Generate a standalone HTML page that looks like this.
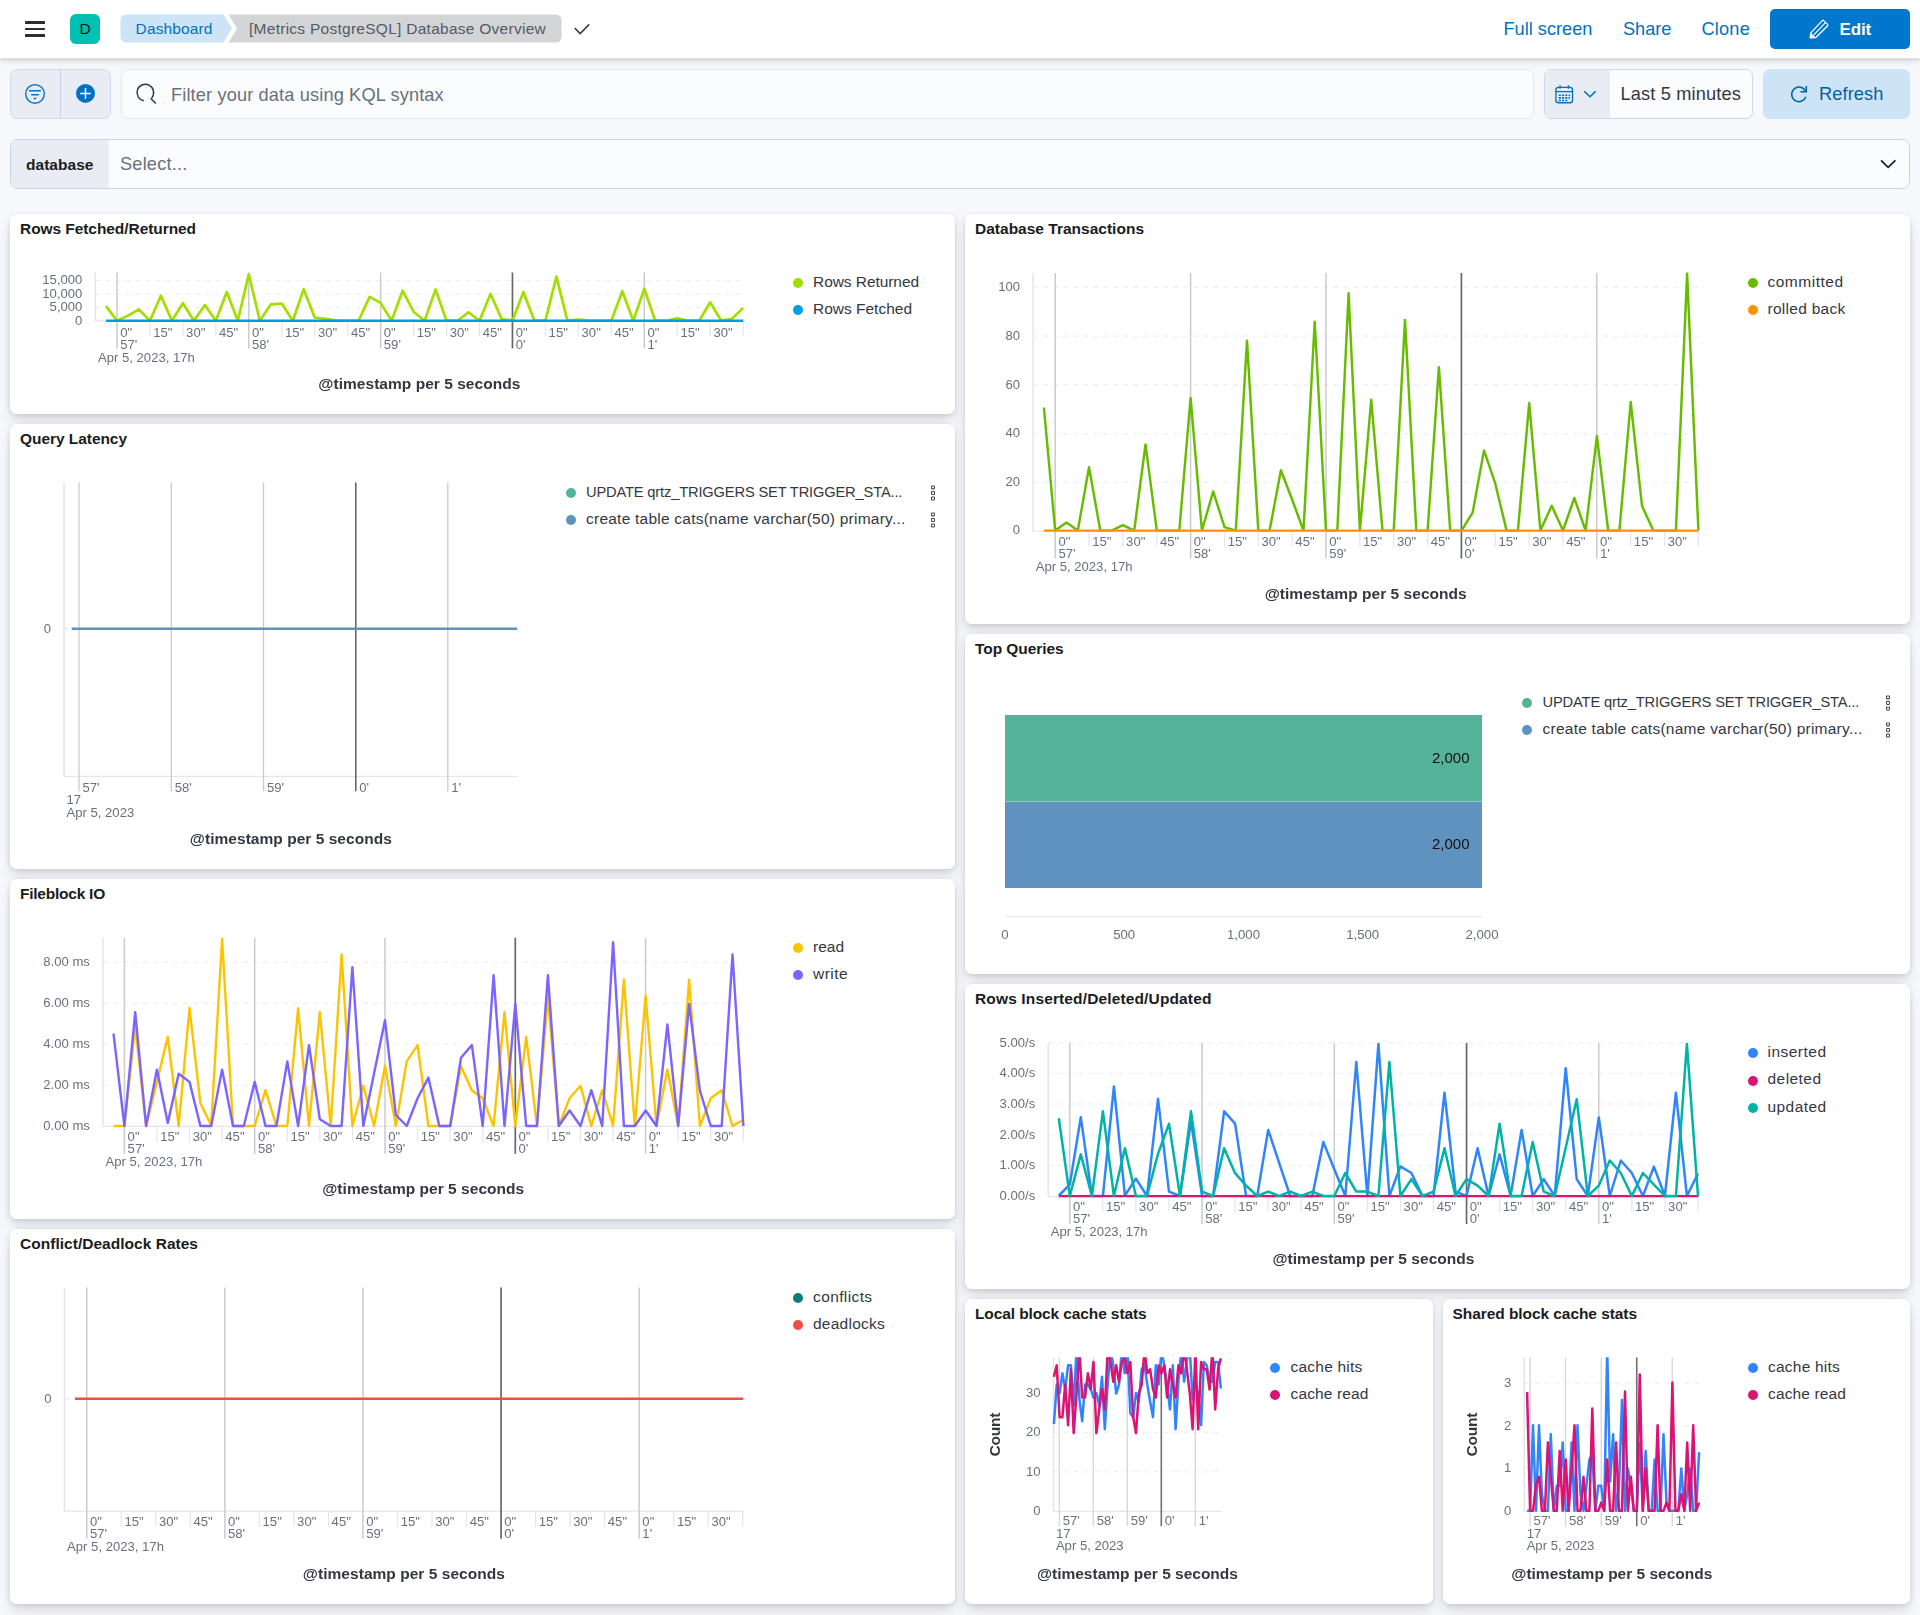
<!DOCTYPE html>
<html lang="en"><head><meta charset="utf-8"><title>[Metrics PostgreSQL] Database Overview</title>
<style>
html,body{margin:0;padding:0}
body{width:1920px;height:1615px;background:#F7F8FC;font-family:"Liberation Sans",sans-serif;position:relative;overflow:hidden;color:#343741}
.abs{position:absolute}
.t{position:absolute;white-space:nowrap;margin:0}
h2.t{font-weight:700}
.panel{position:absolute;background:#fff;border-radius:6.5px;box-shadow:0 1px 4px rgba(0,0,0,.08),0 3px 9px rgba(0,0,0,.065),0 7px 14px rgba(0,0,0,.05),0 14px 18px rgba(0,0,0,.03)}
.dot{position:absolute;width:10px;height:10px;border-radius:50%}
.kebab{position:absolute;width:5px;height:16px}
.kebab i{display:block;box-sizing:border-box;width:4.2px;height:4px;border:1.1px solid #343741;margin-bottom:1.3px;border-radius:.6px}
.bar{position:absolute}
.header{position:absolute;left:0;top:0;width:1920px;height:58px;background:#fff;border-bottom:1px solid rgba(190,198,215,.55);box-shadow:0 1px 3px rgba(0,0,0,.12),0 3px 7px rgba(0,0,0,.07)}
.burger{position:absolute;left:25px;top:21.35px;width:20px}
.burger i{display:block;height:2.6px;background:#2B2D37;margin-bottom:3.7px;border-radius:.5px}
.avatar{position:absolute;left:70px;top:14px;width:30px;height:30px;border-radius:6px;background:#00BFB3;color:#0b0b0d;font-size:15.5px;line-height:29px;text-align:center}
.editbtn{position:absolute;left:1770px;top:8.8px;width:140px;height:40px;border-radius:5px;background:#0077CC}
.fgroup{position:absolute;left:10px;top:69px;width:100.7px;height:49.7px;box-sizing:border-box;border:1px solid #D2D9E8;background:#E9EDF3;border-radius:7px}
.fgroup span{position:absolute;left:49.2px;top:0;bottom:0;width:1px;background:#C9D0E0}
.search{position:absolute;left:121px;top:69px;width:1412.5px;height:49.5px;box-sizing:border-box;border:1px solid #E3E7EF;background:#FBFCFD;border-radius:7px}
.datepick{position:absolute;left:1544px;top:69px;width:208.5px;height:49.5px;box-sizing:border-box;border:1px solid #CED6E6;background:#FBFCFD;border-radius:7px;overflow:hidden}
.datepick span{position:absolute;left:0;top:0;bottom:0;width:65px;background:#E9EDF3}
.refresh{position:absolute;left:1763px;top:69px;width:147px;height:49.5px;border-radius:7px;background:#CCE4F5}
.ctrl{position:absolute;left:10px;top:139px;width:1900px;height:49.6px;box-sizing:border-box;border:1px solid #CDD5E5;background:#FBFCFD;border-radius:7px;overflow:hidden}
.ctrl span{position:absolute;left:0;top:0;bottom:0;width:98px;background:#E9EDF3}
svg text{font-family:"Liberation Sans",sans-serif}
</style></head><body>
<header>
<div class="header"></div>
<div class="burger"><i></i><i></i><i></i></div>
<div class="avatar">D</div>
<svg class="abs" style="left:120px;top:14px" width="450" height="30" viewBox="0 0 450 30"><path d="M6,0.5 H103.5 L112,14.5 L103.5,28.5 H6 A5.5,5.5 0 0 1 0.5,23 V6 A5.5,5.5 0 0 1 6,0.5 Z" fill="#CCE4F5"/><path d="M108.5,0.5 H436 A5.5,5.5 0 0 1 441.5,6 V23 A5.5,5.5 0 0 1 436,28.5 H108.5 L117,14.5 Z" fill="#D3D4D6"/></svg>
<div class="t " style="left:135.60px;top:19.00px;font-size:15.5px;line-height:19px;color:#0071C2;letter-spacing:0.131px;">Dashboard</div>
<div class="t " style="left:249.00px;top:19.00px;font-size:15.5px;line-height:19px;color:#535966;letter-spacing:0.267px;">[Metrics PostgreSQL] Database Overview</div>
<svg class="abs" style="left:572px;top:18px" width="22" height="22" viewBox="0 0 22 22"><path d="M2.8,10.1 L8.2,15.5 L17.2,6.4" fill="none" stroke="#3B3F4A" stroke-width="1.6"/></svg>
<div class="t " style="left:1503.50px;top:18.00px;font-size:18.2px;line-height:22px;color:#0071C2;">Full screen</div>
<div class="t " style="left:1623.00px;top:18.00px;font-size:18.2px;line-height:22px;color:#0071C2;letter-spacing:-0.013px;">Share</div>
<div class="t " style="left:1701.50px;top:18.00px;font-size:18.2px;line-height:22px;color:#0071C2;letter-spacing:0.190px;">Clone</div>
<div class="editbtn"></div>
<svg class="abs" style="left:1808px;top:18px" width="22" height="22" viewBox="0 0 22 22"><path d="M2.8,14.9 L14.3,2.6 Q14.9,2 15.6,2.6 L19.6,6.4 Q20.2,7 19.6,7.7 L7.8,19.5 L2.2,19.9 Z" fill="none" stroke="#fff" stroke-width="1.3" stroke-linejoin="round"/><path d="M2.8,14.9 L7.8,19.5 L2.2,19.9 Z" fill="#fff"/><path d="M5.6,17.1 L17.4,4.7" stroke="#fff" stroke-width="1.2" fill="none"/></svg>
<div class="t " style="left:1839.60px;top:20.00px;font-size:17px;line-height:20px;color:#fff;font-weight:700;letter-spacing:-0.177px;">Edit</div>
<div class="fgroup"><span></span></div>
<svg class="abs" style="left:23px;top:82px" width="24" height="24" viewBox="0 0 24 24"><circle cx="12" cy="11.9" r="9.3" fill="none" stroke="#0071C2" stroke-width="1.35"/><path d="M6,8.8 H17.9 M8.2,12.7 H15.8 M10.7,16.5 H13.3" stroke="#0071C2" stroke-width="1.5" fill="none"/></svg>
<svg class="abs" style="left:73px;top:81px" width="24" height="24" viewBox="0 0 24 24"><circle cx="12.5" cy="12.4" r="9.5" fill="#0071C2"/><path d="M12.5,7.1 V17.7 M7.2,12.4 H17.8" stroke="#fff" stroke-width="1.5" fill="none"/></svg>
<div class="search"></div>
<svg class="abs" style="left:133px;top:81px" width="26" height="26" viewBox="0 0 26 26"><path d="M10.86,19.77 A8.3,8.3 0 1 1 18.66,16.93" fill="none" stroke="#343741" stroke-width="1.45"/><path d="M17.5,17.2 L22.9,22.6" stroke="#343741" stroke-width="1.45" fill="none"/></svg>
<div class="t " style="left:171.00px;top:84.00px;font-size:18.2px;line-height:22px;color:#69707D;letter-spacing:0.140px;">Filter your data using KQL syntax</div>
<div class="datepick"><span></span></div>
<svg class="abs" style="left:1554.4px;top:83.8px" width="21" height="21" viewBox="0 0 22 22"><rect x="2" y="3.6" width="17.4" height="16" rx="2.6" fill="none" stroke="#0071C2" stroke-width="1.4"/><path d="M2,8 H19.4 M6.3,1.4 V5 M15.1,1.4 V5" stroke="#0071C2" stroke-width="1.4" fill="none"/><path d="M5,10.9h2.2v1.7h-2.2z M8.4,10.9h2.2v1.7h-2.2z M11.8,10.9h2.2v1.7h-2.2z M15.2,10.9h1.6v1.7h-1.6z M5,13.7h2.2v1.7h-2.2z M8.4,13.7h2.2v1.7h-2.2z M11.8,13.7h2.2v1.7h-2.2z M15.2,13.7h1.6v1.7h-1.6z M5,16.4h2.2v1.6h-2.2z M8.4,16.4h2.2v1.6h-2.2z M11.8,16.4h2.2v1.6h-2.2z" fill="#0071C2"/></svg>
<svg class="abs" style="left:1582px;top:87px" width="16" height="14" viewBox="0 0 16 14"><path d="M2.4,4.4 L8,9.8 L13.6,4.4" fill="none" stroke="#0071C2" stroke-width="1.5"/></svg>
<div class="t " style="left:1620.50px;top:83.00px;font-size:18.2px;line-height:22px;color:#343741;letter-spacing:0.153px;">Last 5 minutes</div>
<div class="refresh"></div>
<svg class="abs" style="left:1787px;top:82px" width="24" height="24" viewBox="0 0 24 24"><path d="M18.6,9.2 A7.3,7.3 0 1 0 18.9,14.8" fill="none" stroke="#0061A6" stroke-width="1.5"/><path d="M19.3,3.9 V9.7 H13.5" fill="none" stroke="#0061A6" stroke-width="1.5"/></svg>
<div class="t " style="left:1819.00px;top:83.00px;font-size:18.2px;line-height:22px;color:#0061A6;letter-spacing:0.111px;">Refresh</div>
<div class="ctrl"><span></span></div>
<div class="t " style="left:26.00px;top:155.00px;font-size:15.5px;line-height:19px;color:#1A1C21;font-weight:700;letter-spacing:0.038px;">database</div>
<div class="t " style="left:120.00px;top:153.00px;font-size:18.2px;line-height:22px;color:#69707D;letter-spacing:0.194px;">Select...</div>
<svg class="abs" style="left:1878px;top:155px" width="20" height="18" viewBox="0 0 20 18"><path d="M3,5.4 L10.2,12.4 L17.4,5.4" fill="none" stroke="#1A1C21" stroke-width="1.7"/></svg>
</header>
<main>
<section>
<div class="panel" style="left:10px;top:214px;width:945px;height:200px"></div>
<h2 class="t ptitle" style="left:20.00px;top:219.00px;font-size:15.5px;line-height:19px;color:#1A1C21;font-weight:700;letter-spacing:-0.067px;">Rows Fetched/Returned</h2>
<div class="dot" style="left:792.9px;top:277.9px;background:#A4DD00"></div>
<div class="t leg" style="left:813.00px;top:272.00px;font-size:15.5px;line-height:19px;color:#343741;letter-spacing:-0.063px;">Rows Returned</div>
<div class="dot" style="left:792.9px;top:305.0px;background:#009CE0"></div>
<div class="t leg" style="left:813.00px;top:299.00px;font-size:15.5px;line-height:19px;color:#343741;letter-spacing:-0.005px;">Rows Fetched</div>
</section>
<section>
<div class="panel" style="left:10px;top:424px;width:945px;height:445px"></div>
<h2 class="t ptitle" style="left:20.00px;top:429.00px;font-size:15.5px;line-height:19px;color:#1A1C21;font-weight:700;letter-spacing:-0.052px;">Query Latency</h2>
<div class="dot" style="left:565.8px;top:487.9px;background:#54B399"></div>
<div class="t leg" style="left:586.00px;top:483.00px;font-size:14.7px;line-height:18px;color:#343741;letter-spacing:-0.171px;">UPDATE qrtz_TRIGGERS SET TRIGGER_STA...</div>
<svg class="abs" style="left:930.0px;top:484.5px" width="6" height="17" viewBox="0 0 6 17"><g fill="none" stroke="#454956" stroke-width="1.05"><rect x="1.55" y="0.95" width="2.9" height="2.9" rx=".5"/><rect x="1.55" y="6.5" width="2.9" height="2.9" rx=".5"/><rect x="1.55" y="12.05" width="2.9" height="2.9" rx=".5"/></g></svg>
<div class="dot" style="left:565.8px;top:515.0px;background:#6092C0"></div>
<div class="t leg" style="left:586.00px;top:509.00px;font-size:15.5px;line-height:19px;color:#343741;letter-spacing:0.235px;">create table cats(name varchar(50) primary...</div>
<svg class="abs" style="left:930.0px;top:512.4px" width="6" height="17" viewBox="0 0 6 17"><g fill="none" stroke="#454956" stroke-width="1.05"><rect x="1.55" y="0.95" width="2.9" height="2.9" rx=".5"/><rect x="1.55" y="6.5" width="2.9" height="2.9" rx=".5"/><rect x="1.55" y="12.05" width="2.9" height="2.9" rx=".5"/></g></svg>
</section>
<section>
<div class="panel" style="left:10px;top:879px;width:945px;height:340px"></div>
<h2 class="t ptitle" style="left:20.00px;top:884.00px;font-size:15.5px;line-height:19px;color:#1A1C21;font-weight:700;letter-spacing:-0.237px;">Fileblock IO</h2>
<div class="dot" style="left:792.9px;top:942.9px;background:#FCC400"></div>
<div class="t leg" style="left:813.00px;top:937.00px;font-size:15.5px;line-height:19px;color:#343741;">read</div>
<div class="dot" style="left:792.9px;top:970.0px;background:#7B64FF"></div>
<div class="t leg" style="left:813.00px;top:964.00px;font-size:15.5px;line-height:19px;color:#343741;letter-spacing:0.455px;">write</div>
</section>
<section>
<div class="panel" style="left:10px;top:1229px;width:945px;height:375px"></div>
<h2 class="t ptitle" style="left:20.00px;top:1234.00px;font-size:15.5px;line-height:19px;color:#1A1C21;font-weight:700;letter-spacing:0.025px;">Conflict/Deadlock Rates</h2>
<div class="dot" style="left:792.9px;top:1292.9px;background:#0E7D7D"></div>
<div class="t leg" style="left:813.00px;top:1287.00px;font-size:15.5px;line-height:19px;color:#343741;letter-spacing:0.390px;">conflicts</div>
<div class="dot" style="left:792.9px;top:1320.0px;background:#F04E3E"></div>
<div class="t leg" style="left:813.00px;top:1314.00px;font-size:15.5px;line-height:19px;color:#343741;letter-spacing:0.245px;">deadlocks</div>
</section>
<section>
<div class="panel" style="left:965px;top:214px;width:945px;height:410px"></div>
<h2 class="t ptitle" style="left:975.00px;top:219.00px;font-size:15.5px;line-height:19px;color:#1A1C21;font-weight:700;letter-spacing:0.008px;">Database Transactions</h2>
<div class="dot" style="left:1747.6px;top:277.9px;background:#68BC00"></div>
<div class="t leg" style="left:1767.50px;top:272.00px;font-size:15.5px;line-height:19px;color:#343741;letter-spacing:0.502px;">committed</div>
<div class="dot" style="left:1747.6px;top:305.0px;background:#FE9200"></div>
<div class="t leg" style="left:1767.50px;top:299.00px;font-size:15.5px;line-height:19px;color:#343741;letter-spacing:0.277px;">rolled back</div>
</section>
<section>
<div class="panel" style="left:965px;top:634px;width:945px;height:340px"></div>
<h2 class="t ptitle" style="left:975.00px;top:639.00px;font-size:15.5px;line-height:19px;color:#1A1C21;font-weight:700;letter-spacing:-0.071px;">Top Queries</h2>
<div class="bar" style="left:1005px;top:715px;width:477px;height:86.5px;background:#54B399"></div>
<div class="bar" style="left:1005px;top:801.5px;width:477px;height:86.5px;background:#6092C0"></div>
<div class="dot" style="left:1521.6px;top:697.9px;background:#54B399"></div>
<div class="t leg" style="left:1542.50px;top:693.00px;font-size:14.7px;line-height:18px;color:#343741;letter-spacing:-0.159px;">UPDATE qrtz_TRIGGERS SET TRIGGER_STA...</div>
<svg class="abs" style="left:1884.9px;top:694.5px" width="6" height="17" viewBox="0 0 6 17"><g fill="none" stroke="#454956" stroke-width="1.05"><rect x="1.55" y="0.95" width="2.9" height="2.9" rx=".5"/><rect x="1.55" y="6.5" width="2.9" height="2.9" rx=".5"/><rect x="1.55" y="12.05" width="2.9" height="2.9" rx=".5"/></g></svg>
<div class="dot" style="left:1521.6px;top:725.0px;background:#6092C0"></div>
<div class="t leg" style="left:1542.50px;top:719.00px;font-size:15.5px;line-height:19px;color:#343741;letter-spacing:0.246px;">create table cats(name varchar(50) primary...</div>
<svg class="abs" style="left:1884.9px;top:722.4px" width="6" height="17" viewBox="0 0 6 17"><g fill="none" stroke="#454956" stroke-width="1.05"><rect x="1.55" y="0.95" width="2.9" height="2.9" rx=".5"/><rect x="1.55" y="6.5" width="2.9" height="2.9" rx=".5"/><rect x="1.55" y="12.05" width="2.9" height="2.9" rx=".5"/></g></svg>
</section>
<section>
<div class="panel" style="left:965px;top:984px;width:945px;height:305px"></div>
<h2 class="t ptitle" style="left:975.00px;top:989.00px;font-size:15.5px;line-height:19px;color:#1A1C21;font-weight:700;letter-spacing:0.137px;">Rows Inserted/Deleted/Updated</h2>
<div class="dot" style="left:1747.6px;top:1048.0px;background:#3185FC"></div>
<div class="t leg" style="left:1767.50px;top:1042.00px;font-size:15.5px;line-height:19px;color:#343741;letter-spacing:0.483px;">inserted</div>
<div class="dot" style="left:1747.6px;top:1075.5px;background:#DB1374"></div>
<div class="t leg" style="left:1767.50px;top:1069.00px;font-size:15.5px;line-height:19px;color:#343741;letter-spacing:0.450px;">deleted</div>
<div class="dot" style="left:1747.6px;top:1102.9px;background:#00B3A4"></div>
<div class="t leg" style="left:1767.50px;top:1097.00px;font-size:15.5px;line-height:19px;color:#343741;letter-spacing:0.425px;">updated</div>
</section>
<section>
<div class="panel" style="left:965px;top:1299px;width:467.5px;height:305px"></div>
<h2 class="t ptitle" style="left:975.00px;top:1304.00px;font-size:15.5px;line-height:19px;color:#1A1C21;font-weight:700;letter-spacing:-0.109px;">Local block cache stats</h2>
<div class="dot" style="left:1270.0px;top:1362.9px;background:#3185FC"></div>
<div class="t leg" style="left:1290.50px;top:1357.00px;font-size:15.5px;line-height:19px;color:#343741;letter-spacing:0.222px;">cache hits</div>
<div class="dot" style="left:1270.0px;top:1390.0px;background:#DB1374"></div>
<div class="t leg" style="left:1290.50px;top:1384.00px;font-size:15.5px;line-height:19px;color:#343741;letter-spacing:0.132px;">cache read</div>
</section>
<section>
<div class="panel" style="left:1442.5px;top:1299px;width:467.5px;height:305px"></div>
<h2 class="t ptitle" style="left:1452.50px;top:1304.00px;font-size:15.5px;line-height:19px;color:#1A1C21;font-weight:700;letter-spacing:-0.065px;">Shared block cache stats</h2>
<div class="dot" style="left:1748.0px;top:1362.9px;background:#3185FC"></div>
<div class="t leg" style="left:1768.00px;top:1357.00px;font-size:15.5px;line-height:19px;color:#343741;letter-spacing:0.222px;">cache hits</div>
<div class="dot" style="left:1748.0px;top:1390.0px;background:#DB1374"></div>
<div class="t leg" style="left:1768.00px;top:1384.00px;font-size:15.5px;line-height:19px;color:#343741;letter-spacing:0.132px;">cache read</div>
</section>
</main>
<svg class="abs" style="left:0;top:0;pointer-events:none;will-change:transform" width="1920" height="1615" viewBox="0 0 1920 1615">
<line x1="95.40" y1="280.40" x2="743.00" y2="280.40" stroke="#E9ECF3" stroke-width="1" stroke-dasharray="5 5"/>
<line x1="95.40" y1="294.00" x2="743.00" y2="294.00" stroke="#E9ECF3" stroke-width="1" stroke-dasharray="5 5"/>
<line x1="95.40" y1="307.60" x2="743.00" y2="307.60" stroke="#E9ECF3" stroke-width="1" stroke-dasharray="5 5"/>
<line x1="95.40" y1="272.50" x2="95.40" y2="321.40" stroke="#E1E4EC" stroke-width="1.5" />
<line x1="95.40" y1="320.90" x2="743.20" y2="320.90" stroke="#E3E6EE" stroke-width="1.25" />
<line x1="117.00" y1="272.50" x2="117.00" y2="348.40" stroke="#CBCBCB" stroke-width="1.5" />
<text x="120.20" y="348.90" font-size="13.1" fill="#69707D" >57'</text>
<text x="120.20" y="336.90" font-size="13.1" fill="#69707D" >0&quot;</text>
<line x1="149.95" y1="320.90" x2="149.95" y2="336.40" stroke="#E3E6EE" stroke-width="1.25" />
<text x="153.15" y="336.90" font-size="13.1" fill="#69707D" >15&quot;</text>
<line x1="182.91" y1="320.90" x2="182.91" y2="336.40" stroke="#E3E6EE" stroke-width="1.25" />
<text x="186.11" y="336.90" font-size="13.1" fill="#69707D" >30&quot;</text>
<line x1="215.87" y1="320.90" x2="215.87" y2="336.40" stroke="#E3E6EE" stroke-width="1.25" />
<text x="219.06" y="336.90" font-size="13.1" fill="#69707D" >45&quot;</text>
<line x1="248.82" y1="272.50" x2="248.82" y2="348.40" stroke="#CBCBCB" stroke-width="1.5" />
<text x="252.02" y="348.90" font-size="13.1" fill="#69707D" >58'</text>
<text x="252.02" y="336.90" font-size="13.1" fill="#69707D" >0&quot;</text>
<line x1="281.77" y1="320.90" x2="281.77" y2="336.40" stroke="#E3E6EE" stroke-width="1.25" />
<text x="284.97" y="336.90" font-size="13.1" fill="#69707D" >15&quot;</text>
<line x1="314.73" y1="320.90" x2="314.73" y2="336.40" stroke="#E3E6EE" stroke-width="1.25" />
<text x="317.93" y="336.90" font-size="13.1" fill="#69707D" >30&quot;</text>
<line x1="347.69" y1="320.90" x2="347.69" y2="336.40" stroke="#E3E6EE" stroke-width="1.25" />
<text x="350.88" y="336.90" font-size="13.1" fill="#69707D" >45&quot;</text>
<line x1="380.64" y1="272.50" x2="380.64" y2="348.40" stroke="#CBCBCB" stroke-width="1.5" />
<text x="383.84" y="348.90" font-size="13.1" fill="#69707D" >59'</text>
<text x="383.84" y="336.90" font-size="13.1" fill="#69707D" >0&quot;</text>
<line x1="413.59" y1="320.90" x2="413.59" y2="336.40" stroke="#E3E6EE" stroke-width="1.25" />
<text x="416.79" y="336.90" font-size="13.1" fill="#69707D" >15&quot;</text>
<line x1="446.55" y1="320.90" x2="446.55" y2="336.40" stroke="#E3E6EE" stroke-width="1.25" />
<text x="449.75" y="336.90" font-size="13.1" fill="#69707D" >30&quot;</text>
<line x1="479.50" y1="320.90" x2="479.50" y2="336.40" stroke="#E3E6EE" stroke-width="1.25" />
<text x="482.70" y="336.90" font-size="13.1" fill="#69707D" >45&quot;</text>
<line x1="512.46" y1="272.50" x2="512.46" y2="348.40" stroke="#676767" stroke-width="1.7" />
<text x="515.66" y="348.90" font-size="13.1" fill="#69707D" >0'</text>
<text x="515.66" y="336.90" font-size="13.1" fill="#69707D" >0&quot;</text>
<line x1="545.41" y1="320.90" x2="545.41" y2="336.40" stroke="#E3E6EE" stroke-width="1.25" />
<text x="548.62" y="336.90" font-size="13.1" fill="#69707D" >15&quot;</text>
<line x1="578.37" y1="320.90" x2="578.37" y2="336.40" stroke="#E3E6EE" stroke-width="1.25" />
<text x="581.57" y="336.90" font-size="13.1" fill="#69707D" >30&quot;</text>
<line x1="611.33" y1="320.90" x2="611.33" y2="336.40" stroke="#E3E6EE" stroke-width="1.25" />
<text x="614.53" y="336.90" font-size="13.1" fill="#69707D" >45&quot;</text>
<line x1="644.28" y1="272.50" x2="644.28" y2="348.40" stroke="#CBCBCB" stroke-width="1.5" />
<text x="647.48" y="348.90" font-size="13.1" fill="#69707D" >1'</text>
<text x="647.48" y="336.90" font-size="13.1" fill="#69707D" >0&quot;</text>
<line x1="677.24" y1="320.90" x2="677.24" y2="336.40" stroke="#E3E6EE" stroke-width="1.25" />
<text x="680.44" y="336.90" font-size="13.1" fill="#69707D" >15&quot;</text>
<line x1="710.19" y1="320.90" x2="710.19" y2="336.40" stroke="#E3E6EE" stroke-width="1.25" />
<text x="713.39" y="336.90" font-size="13.1" fill="#69707D" >30&quot;</text>
<line x1="743.14" y1="320.90" x2="743.14" y2="336.40" stroke="#E3E6EE" stroke-width="1.25" />
<text x="98.00" y="361.90" font-size="13.1" fill="#69707D" >Apr 5, 2023, 17h</text>
<text x="419.30" y="388.80" font-size="15.5" fill="#343741" text-anchor="middle" font-weight="700" textLength="202.0" lengthAdjust="spacing" >@timestamp per 5 seconds</text>
<text x="82.40" y="283.95" font-size="13.1" fill="#69707D" text-anchor="end" >15,000</text>
<text x="82.40" y="297.75" font-size="13.1" fill="#69707D" text-anchor="end" >10,000</text>
<text x="82.40" y="311.35" font-size="13.1" fill="#69707D" text-anchor="end" >5,000</text>
<text x="82.40" y="324.55" font-size="13.1" fill="#69707D" text-anchor="end" >0</text>
<polyline points="106.0,306.1 117.0,320.7 128.0,315.6 138.9,309.4 149.9,320.7 160.9,295.7 171.9,320.7 182.9,303.2 193.9,320.7 204.9,305.1 215.8,320.7 226.8,292.0 237.8,320.7 248.8,274.2 259.8,320.7 270.8,304.4 281.8,303.6 292.8,320.7 303.7,289.2 314.7,317.5 325.7,318.8 336.7,320.7 347.7,320.7 358.6,320.7 369.6,296.9 380.6,302.9 391.6,320.7 402.6,290.7 413.6,311.7 424.6,320.7 435.6,289.4 446.5,320.7 457.5,320.7 468.5,312.2 479.5,320.7 490.5,293.9 501.5,318.8 512.4,320.7 523.4,292.0 534.4,320.7 545.4,320.7 556.4,276.6 567.4,320.7 578.4,319.7 589.3,320.7 600.3,320.7 611.3,320.7 622.3,291.2 633.3,320.7 644.3,288.8 655.2,320.7 666.2,320.7 677.2,318.2 688.2,320.7 699.2,320.7 710.2,302.3 721.2,320.7 732.1,318.8 743.1,307.9" fill="none" stroke="#A4DD00" stroke-width="2.7" stroke-linejoin="round" />
<line x1="106.00" y1="320.70" x2="743.20" y2="320.70" stroke="#009CE0" stroke-width="2.6" />
<line x1="64.10" y1="482.40" x2="64.10" y2="776.80" stroke="#E1E4EC" stroke-width="1.5" />
<line x1="64.10" y1="776.30" x2="517.50" y2="776.30" stroke="#E3E6EE" stroke-width="1.25" />
<line x1="79.00" y1="482.40" x2="79.00" y2="791.30" stroke="#CBCBCB" stroke-width="1.3" />
<text x="82.40" y="791.80" font-size="13.1" fill="#69707D" >57'</text>
<line x1="171.30" y1="482.40" x2="171.30" y2="791.30" stroke="#CBCBCB" stroke-width="1.3" />
<text x="174.70" y="791.80" font-size="13.1" fill="#69707D" >58'</text>
<line x1="263.50" y1="482.40" x2="263.50" y2="791.30" stroke="#CBCBCB" stroke-width="1.3" />
<text x="266.90" y="791.80" font-size="13.1" fill="#69707D" >59'</text>
<line x1="355.80" y1="482.40" x2="355.80" y2="791.30" stroke="#676767" stroke-width="1.6" />
<text x="359.20" y="791.80" font-size="13.1" fill="#69707D" >0'</text>
<line x1="447.80" y1="482.40" x2="447.80" y2="791.30" stroke="#CBCBCB" stroke-width="1.3" />
<text x="451.20" y="791.80" font-size="13.1" fill="#69707D" >1'</text>
<text x="66.50" y="803.90" font-size="13.1" fill="#69707D" >17</text>
<text x="66.50" y="816.90" font-size="13.1" fill="#69707D" >Apr 5, 2023</text>
<text x="290.80" y="844.30" font-size="15.5" fill="#343741" text-anchor="middle" font-weight="700" textLength="202.0" lengthAdjust="spacing" >@timestamp per 5 seconds</text>
<text x="51.10" y="633.15" font-size="13.1" fill="#69707D" text-anchor="end" >0</text>
<line x1="64.10" y1="628.70" x2="69.00" y2="628.70" stroke="#E3E6EE" stroke-width="1" />
<line x1="71.70" y1="628.70" x2="517.20" y2="628.70" stroke="#6092C0" stroke-width="2.4" />
<line x1="102.90" y1="962.30" x2="743.00" y2="962.30" stroke="#E9ECF3" stroke-width="1" stroke-dasharray="5 5"/>
<line x1="102.90" y1="1003.30" x2="743.00" y2="1003.30" stroke="#E9ECF3" stroke-width="1" stroke-dasharray="5 5"/>
<line x1="102.90" y1="1044.20" x2="743.00" y2="1044.20" stroke="#E9ECF3" stroke-width="1" stroke-dasharray="5 5"/>
<line x1="102.90" y1="1085.20" x2="743.00" y2="1085.20" stroke="#E9ECF3" stroke-width="1" stroke-dasharray="5 5"/>
<line x1="102.90" y1="937.80" x2="102.90" y2="1126.80" stroke="#E1E4EC" stroke-width="1.5" />
<line x1="102.90" y1="1126.30" x2="743.50" y2="1126.30" stroke="#E3E6EE" stroke-width="1.25" />
<line x1="124.40" y1="937.80" x2="124.40" y2="1153.80" stroke="#CBCBCB" stroke-width="1.5" />
<text x="127.60" y="1152.80" font-size="13.1" fill="#69707D" >57'</text>
<text x="127.60" y="1140.80" font-size="13.1" fill="#69707D" >0&quot;</text>
<line x1="156.98" y1="1126.30" x2="156.98" y2="1141.80" stroke="#E3E6EE" stroke-width="1.25" />
<text x="160.18" y="1140.80" font-size="13.1" fill="#69707D" >15&quot;</text>
<line x1="189.55" y1="1126.30" x2="189.55" y2="1141.80" stroke="#E3E6EE" stroke-width="1.25" />
<text x="192.75" y="1140.80" font-size="13.1" fill="#69707D" >30&quot;</text>
<line x1="222.12" y1="1126.30" x2="222.12" y2="1141.80" stroke="#E3E6EE" stroke-width="1.25" />
<text x="225.32" y="1140.80" font-size="13.1" fill="#69707D" >45&quot;</text>
<line x1="254.70" y1="937.80" x2="254.70" y2="1153.80" stroke="#CBCBCB" stroke-width="1.5" />
<text x="257.90" y="1152.80" font-size="13.1" fill="#69707D" >58'</text>
<text x="257.90" y="1140.80" font-size="13.1" fill="#69707D" >0&quot;</text>
<line x1="287.27" y1="1126.30" x2="287.27" y2="1141.80" stroke="#E3E6EE" stroke-width="1.25" />
<text x="290.47" y="1140.80" font-size="13.1" fill="#69707D" >15&quot;</text>
<line x1="319.85" y1="1126.30" x2="319.85" y2="1141.80" stroke="#E3E6EE" stroke-width="1.25" />
<text x="323.05" y="1140.80" font-size="13.1" fill="#69707D" >30&quot;</text>
<line x1="352.43" y1="1126.30" x2="352.43" y2="1141.80" stroke="#E3E6EE" stroke-width="1.25" />
<text x="355.63" y="1140.80" font-size="13.1" fill="#69707D" >45&quot;</text>
<line x1="385.00" y1="937.80" x2="385.00" y2="1153.80" stroke="#CBCBCB" stroke-width="1.5" />
<text x="388.20" y="1152.80" font-size="13.1" fill="#69707D" >59'</text>
<text x="388.20" y="1140.80" font-size="13.1" fill="#69707D" >0&quot;</text>
<line x1="417.58" y1="1126.30" x2="417.58" y2="1141.80" stroke="#E3E6EE" stroke-width="1.25" />
<text x="420.78" y="1140.80" font-size="13.1" fill="#69707D" >15&quot;</text>
<line x1="450.15" y1="1126.30" x2="450.15" y2="1141.80" stroke="#E3E6EE" stroke-width="1.25" />
<text x="453.35" y="1140.80" font-size="13.1" fill="#69707D" >30&quot;</text>
<line x1="482.73" y1="1126.30" x2="482.73" y2="1141.80" stroke="#E3E6EE" stroke-width="1.25" />
<text x="485.93" y="1140.80" font-size="13.1" fill="#69707D" >45&quot;</text>
<line x1="515.30" y1="937.80" x2="515.30" y2="1153.80" stroke="#676767" stroke-width="1.7" />
<text x="518.50" y="1152.80" font-size="13.1" fill="#69707D" >0'</text>
<text x="518.50" y="1140.80" font-size="13.1" fill="#69707D" >0&quot;</text>
<line x1="547.88" y1="1126.30" x2="547.88" y2="1141.80" stroke="#E3E6EE" stroke-width="1.25" />
<text x="551.08" y="1140.80" font-size="13.1" fill="#69707D" >15&quot;</text>
<line x1="580.45" y1="1126.30" x2="580.45" y2="1141.80" stroke="#E3E6EE" stroke-width="1.25" />
<text x="583.65" y="1140.80" font-size="13.1" fill="#69707D" >30&quot;</text>
<line x1="613.03" y1="1126.30" x2="613.03" y2="1141.80" stroke="#E3E6EE" stroke-width="1.25" />
<text x="616.23" y="1140.80" font-size="13.1" fill="#69707D" >45&quot;</text>
<line x1="645.60" y1="937.80" x2="645.60" y2="1153.80" stroke="#CBCBCB" stroke-width="1.5" />
<text x="648.80" y="1152.80" font-size="13.1" fill="#69707D" >1'</text>
<text x="648.80" y="1140.80" font-size="13.1" fill="#69707D" >0&quot;</text>
<line x1="678.18" y1="1126.30" x2="678.18" y2="1141.80" stroke="#E3E6EE" stroke-width="1.25" />
<text x="681.38" y="1140.80" font-size="13.1" fill="#69707D" >15&quot;</text>
<line x1="710.75" y1="1126.30" x2="710.75" y2="1141.80" stroke="#E3E6EE" stroke-width="1.25" />
<text x="713.95" y="1140.80" font-size="13.1" fill="#69707D" >30&quot;</text>
<line x1="743.33" y1="1126.30" x2="743.33" y2="1141.80" stroke="#E3E6EE" stroke-width="1.25" />
<text x="105.50" y="1165.80" font-size="13.1" fill="#69707D" >Apr 5, 2023, 17h</text>
<text x="423.20" y="1193.80" font-size="15.5" fill="#343741" text-anchor="middle" font-weight="700" textLength="202.0" lengthAdjust="spacing" >@timestamp per 5 seconds</text>
<text x="89.90" y="965.95" font-size="13.1" fill="#69707D" text-anchor="end" >8.00 ms</text>
<text x="89.90" y="1006.95" font-size="13.1" fill="#69707D" text-anchor="end" >6.00 ms</text>
<text x="89.90" y="1047.95" font-size="13.1" fill="#69707D" text-anchor="end" >4.00 ms</text>
<text x="89.90" y="1088.95" font-size="13.1" fill="#69707D" text-anchor="end" >2.00 ms</text>
<text x="89.90" y="1129.65" font-size="13.1" fill="#69707D" text-anchor="end" >0.00 ms</text>
<polyline points="113.5,1126.0 124.4,1126.0 135.2,1025.6 146.1,1126.0 156.9,1081.9 167.8,1036.9 178.7,1126.0 189.5,1007.8 200.4,1103.2 211.2,1125.3 222.1,938.9 233.0,1126.0 243.8,1126.0 254.7,1126.0 265.5,1090.2 276.4,1126.0 287.3,1126.0 298.1,1008.3 309.0,1126.0 319.8,1012.2 330.7,1126.0 341.6,954.5 352.4,1126.0 363.3,1085.8 374.1,1126.0 385.0,1065.7 395.9,1126.0 406.7,1061.4 417.6,1045.1 428.4,1126.0 439.3,1126.0 450.2,1126.0 461.0,1066.3 471.9,1090.6 482.7,1098.2 493.6,1126.0 504.5,1012.2 515.3,1126.0 526.2,1036.9 537.0,1126.0 547.9,996.4 558.8,1126.0 569.6,1098.2 580.5,1085.8 591.3,1126.0 602.2,1090.2 613.1,1126.0 623.9,979.7 634.8,1126.0 645.6,995.9 656.5,1126.0 667.4,1069.6 678.2,1126.0 689.1,979.7 699.9,1126.0 710.8,1098.2 721.7,1090.2 732.5,1126.0 743.4,1119.9" fill="none" stroke="#FCC400" stroke-width="2.4" stroke-linejoin="round" />
<polyline points="113.5,1033.6 124.4,1126.0 135.2,1012.2 146.1,1126.0 156.9,1069.6 167.8,1123.1 178.7,1073.7 189.5,1081.9 200.4,1126.0 211.2,1126.0 222.1,1069.6 233.0,1126.0 243.8,1126.0 254.7,1081.9 265.5,1126.0 276.4,1126.0 287.3,1061.4 298.1,1126.0 309.0,1045.1 319.8,1119.2 330.7,1126.0 341.6,1126.0 352.4,967.1 363.3,1126.0 374.1,1073.3 385.0,1020.2 395.9,1115.1 406.7,1126.0 417.6,1098.2 428.4,1077.6 439.3,1126.0 450.2,1126.0 461.0,1057.7 471.9,1045.1 482.7,1126.0 493.6,975.3 504.5,1126.0 515.3,1003.9 526.2,1126.0 537.0,1126.0 547.9,975.3 558.8,1126.0 569.6,1110.5 580.5,1126.0 591.3,1090.2 602.2,1126.0 613.1,942.2 623.9,1126.0 634.8,1126.0 645.6,1110.5 656.5,1126.0 667.4,1024.5 678.2,1126.0 689.1,1003.9 699.9,1090.6 710.8,1126.0 721.7,1126.0 732.5,954.5 743.4,1126.0" fill="none" stroke="#7B64FF" stroke-width="2.4" stroke-linejoin="round" />
<line x1="64.50" y1="1287.50" x2="64.50" y2="1511.70" stroke="#E1E4EC" stroke-width="1.5" />
<line x1="64.50" y1="1511.20" x2="743.20" y2="1511.20" stroke="#E3E6EE" stroke-width="1.25" />
<line x1="86.75" y1="1287.50" x2="86.75" y2="1538.70" stroke="#CBCBCB" stroke-width="1.5" />
<text x="89.95" y="1538.40" font-size="13.1" fill="#69707D" >57'</text>
<text x="89.95" y="1526.40" font-size="13.1" fill="#69707D" >0&quot;</text>
<line x1="121.28" y1="1511.20" x2="121.28" y2="1526.70" stroke="#E3E6EE" stroke-width="1.25" />
<text x="124.48" y="1526.40" font-size="13.1" fill="#69707D" >15&quot;</text>
<line x1="155.80" y1="1511.20" x2="155.80" y2="1526.70" stroke="#E3E6EE" stroke-width="1.25" />
<text x="159.00" y="1526.40" font-size="13.1" fill="#69707D" >30&quot;</text>
<line x1="190.32" y1="1511.20" x2="190.32" y2="1526.70" stroke="#E3E6EE" stroke-width="1.25" />
<text x="193.52" y="1526.40" font-size="13.1" fill="#69707D" >45&quot;</text>
<line x1="224.85" y1="1287.50" x2="224.85" y2="1538.70" stroke="#CBCBCB" stroke-width="1.5" />
<text x="228.05" y="1538.40" font-size="13.1" fill="#69707D" >58'</text>
<text x="228.05" y="1526.40" font-size="13.1" fill="#69707D" >0&quot;</text>
<line x1="259.38" y1="1511.20" x2="259.38" y2="1526.70" stroke="#E3E6EE" stroke-width="1.25" />
<text x="262.57" y="1526.40" font-size="13.1" fill="#69707D" >15&quot;</text>
<line x1="293.90" y1="1511.20" x2="293.90" y2="1526.70" stroke="#E3E6EE" stroke-width="1.25" />
<text x="297.10" y="1526.40" font-size="13.1" fill="#69707D" >30&quot;</text>
<line x1="328.42" y1="1511.20" x2="328.42" y2="1526.70" stroke="#E3E6EE" stroke-width="1.25" />
<text x="331.62" y="1526.40" font-size="13.1" fill="#69707D" >45&quot;</text>
<line x1="362.95" y1="1287.50" x2="362.95" y2="1538.70" stroke="#CBCBCB" stroke-width="1.5" />
<text x="366.15" y="1538.40" font-size="13.1" fill="#69707D" >59'</text>
<text x="366.15" y="1526.40" font-size="13.1" fill="#69707D" >0&quot;</text>
<line x1="397.47" y1="1511.20" x2="397.47" y2="1526.70" stroke="#E3E6EE" stroke-width="1.25" />
<text x="400.67" y="1526.40" font-size="13.1" fill="#69707D" >15&quot;</text>
<line x1="432.00" y1="1511.20" x2="432.00" y2="1526.70" stroke="#E3E6EE" stroke-width="1.25" />
<text x="435.20" y="1526.40" font-size="13.1" fill="#69707D" >30&quot;</text>
<line x1="466.52" y1="1511.20" x2="466.52" y2="1526.70" stroke="#E3E6EE" stroke-width="1.25" />
<text x="469.72" y="1526.40" font-size="13.1" fill="#69707D" >45&quot;</text>
<line x1="501.05" y1="1287.50" x2="501.05" y2="1538.70" stroke="#676767" stroke-width="1.7" />
<text x="504.25" y="1538.40" font-size="13.1" fill="#69707D" >0'</text>
<text x="504.25" y="1526.40" font-size="13.1" fill="#69707D" >0&quot;</text>
<line x1="535.58" y1="1511.20" x2="535.58" y2="1526.70" stroke="#E3E6EE" stroke-width="1.25" />
<text x="538.78" y="1526.40" font-size="13.1" fill="#69707D" >15&quot;</text>
<line x1="570.10" y1="1511.20" x2="570.10" y2="1526.70" stroke="#E3E6EE" stroke-width="1.25" />
<text x="573.30" y="1526.40" font-size="13.1" fill="#69707D" >30&quot;</text>
<line x1="604.62" y1="1511.20" x2="604.62" y2="1526.70" stroke="#E3E6EE" stroke-width="1.25" />
<text x="607.83" y="1526.40" font-size="13.1" fill="#69707D" >45&quot;</text>
<line x1="639.15" y1="1287.50" x2="639.15" y2="1538.70" stroke="#CBCBCB" stroke-width="1.5" />
<text x="642.35" y="1538.40" font-size="13.1" fill="#69707D" >1'</text>
<text x="642.35" y="1526.40" font-size="13.1" fill="#69707D" >0&quot;</text>
<line x1="673.67" y1="1511.20" x2="673.67" y2="1526.70" stroke="#E3E6EE" stroke-width="1.25" />
<text x="676.88" y="1526.40" font-size="13.1" fill="#69707D" >15&quot;</text>
<line x1="708.20" y1="1511.20" x2="708.20" y2="1526.70" stroke="#E3E6EE" stroke-width="1.25" />
<text x="711.40" y="1526.40" font-size="13.1" fill="#69707D" >30&quot;</text>
<line x1="742.73" y1="1511.20" x2="742.73" y2="1526.70" stroke="#E3E6EE" stroke-width="1.25" />
<text x="67.10" y="1551.40" font-size="13.1" fill="#69707D" >Apr 5, 2023, 17h</text>
<text x="403.85" y="1579.10" font-size="15.5" fill="#343741" text-anchor="middle" font-weight="700" textLength="202.0" lengthAdjust="spacing" >@timestamp per 5 seconds</text>
<text x="51.50" y="1402.95" font-size="13.1" fill="#69707D" text-anchor="end" >0</text>
<line x1="64.50" y1="1398.70" x2="69.50" y2="1398.70" stroke="#E3E6EE" stroke-width="1" />
<line x1="75.00" y1="1398.70" x2="743.20" y2="1398.70" stroke="#F04E3E" stroke-width="2.4" />
<line x1="1033.10" y1="287.20" x2="1698.00" y2="287.20" stroke="#E9ECF3" stroke-width="1" stroke-dasharray="5 5"/>
<line x1="1033.10" y1="336.10" x2="1698.00" y2="336.10" stroke="#E9ECF3" stroke-width="1" stroke-dasharray="5 5"/>
<line x1="1033.10" y1="384.80" x2="1698.00" y2="384.80" stroke="#E9ECF3" stroke-width="1" stroke-dasharray="5 5"/>
<line x1="1033.10" y1="433.70" x2="1698.00" y2="433.70" stroke="#E9ECF3" stroke-width="1" stroke-dasharray="5 5"/>
<line x1="1033.10" y1="482.30" x2="1698.00" y2="482.30" stroke="#E9ECF3" stroke-width="1" stroke-dasharray="5 5"/>
<line x1="1033.10" y1="272.90" x2="1033.10" y2="531.50" stroke="#E1E4EC" stroke-width="1.5" />
<line x1="1033.10" y1="531.00" x2="1698.20" y2="531.00" stroke="#E3E6EE" stroke-width="1.25" />
<line x1="1055.20" y1="272.90" x2="1055.20" y2="558.50" stroke="#CBCBCB" stroke-width="1.5" />
<text x="1058.40" y="557.80" font-size="13.1" fill="#69707D" >57'</text>
<text x="1058.40" y="545.80" font-size="13.1" fill="#69707D" >0&quot;</text>
<line x1="1089.05" y1="531.00" x2="1089.05" y2="546.50" stroke="#E3E6EE" stroke-width="1.25" />
<text x="1092.25" y="545.80" font-size="13.1" fill="#69707D" >15&quot;</text>
<line x1="1122.90" y1="531.00" x2="1122.90" y2="546.50" stroke="#E3E6EE" stroke-width="1.25" />
<text x="1126.10" y="545.80" font-size="13.1" fill="#69707D" >30&quot;</text>
<line x1="1156.75" y1="531.00" x2="1156.75" y2="546.50" stroke="#E3E6EE" stroke-width="1.25" />
<text x="1159.95" y="545.80" font-size="13.1" fill="#69707D" >45&quot;</text>
<line x1="1190.60" y1="272.90" x2="1190.60" y2="558.50" stroke="#CBCBCB" stroke-width="1.5" />
<text x="1193.80" y="557.80" font-size="13.1" fill="#69707D" >58'</text>
<text x="1193.80" y="545.80" font-size="13.1" fill="#69707D" >0&quot;</text>
<line x1="1224.45" y1="531.00" x2="1224.45" y2="546.50" stroke="#E3E6EE" stroke-width="1.25" />
<text x="1227.65" y="545.80" font-size="13.1" fill="#69707D" >15&quot;</text>
<line x1="1258.30" y1="531.00" x2="1258.30" y2="546.50" stroke="#E3E6EE" stroke-width="1.25" />
<text x="1261.50" y="545.80" font-size="13.1" fill="#69707D" >30&quot;</text>
<line x1="1292.15" y1="531.00" x2="1292.15" y2="546.50" stroke="#E3E6EE" stroke-width="1.25" />
<text x="1295.35" y="545.80" font-size="13.1" fill="#69707D" >45&quot;</text>
<line x1="1326.00" y1="272.90" x2="1326.00" y2="558.50" stroke="#CBCBCB" stroke-width="1.5" />
<text x="1329.20" y="557.80" font-size="13.1" fill="#69707D" >59'</text>
<text x="1329.20" y="545.80" font-size="13.1" fill="#69707D" >0&quot;</text>
<line x1="1359.85" y1="531.00" x2="1359.85" y2="546.50" stroke="#E3E6EE" stroke-width="1.25" />
<text x="1363.05" y="545.80" font-size="13.1" fill="#69707D" >15&quot;</text>
<line x1="1393.70" y1="531.00" x2="1393.70" y2="546.50" stroke="#E3E6EE" stroke-width="1.25" />
<text x="1396.90" y="545.80" font-size="13.1" fill="#69707D" >30&quot;</text>
<line x1="1427.55" y1="531.00" x2="1427.55" y2="546.50" stroke="#E3E6EE" stroke-width="1.25" />
<text x="1430.75" y="545.80" font-size="13.1" fill="#69707D" >45&quot;</text>
<line x1="1461.40" y1="272.90" x2="1461.40" y2="558.50" stroke="#676767" stroke-width="1.7" />
<text x="1464.60" y="557.80" font-size="13.1" fill="#69707D" >0'</text>
<text x="1464.60" y="545.80" font-size="13.1" fill="#69707D" >0&quot;</text>
<line x1="1495.25" y1="531.00" x2="1495.25" y2="546.50" stroke="#E3E6EE" stroke-width="1.25" />
<text x="1498.45" y="545.80" font-size="13.1" fill="#69707D" >15&quot;</text>
<line x1="1529.10" y1="531.00" x2="1529.10" y2="546.50" stroke="#E3E6EE" stroke-width="1.25" />
<text x="1532.30" y="545.80" font-size="13.1" fill="#69707D" >30&quot;</text>
<line x1="1562.95" y1="531.00" x2="1562.95" y2="546.50" stroke="#E3E6EE" stroke-width="1.25" />
<text x="1566.15" y="545.80" font-size="13.1" fill="#69707D" >45&quot;</text>
<line x1="1596.80" y1="272.90" x2="1596.80" y2="558.50" stroke="#CBCBCB" stroke-width="1.5" />
<text x="1600.00" y="557.80" font-size="13.1" fill="#69707D" >1'</text>
<text x="1600.00" y="545.80" font-size="13.1" fill="#69707D" >0&quot;</text>
<line x1="1630.65" y1="531.00" x2="1630.65" y2="546.50" stroke="#E3E6EE" stroke-width="1.25" />
<text x="1633.85" y="545.80" font-size="13.1" fill="#69707D" >15&quot;</text>
<line x1="1664.50" y1="531.00" x2="1664.50" y2="546.50" stroke="#E3E6EE" stroke-width="1.25" />
<text x="1667.70" y="545.80" font-size="13.1" fill="#69707D" >30&quot;</text>
<line x1="1698.35" y1="531.00" x2="1698.35" y2="546.50" stroke="#E3E6EE" stroke-width="1.25" />
<text x="1035.70" y="570.80" font-size="13.1" fill="#69707D" >Apr 5, 2023, 17h</text>
<text x="1365.65" y="599.00" font-size="15.5" fill="#343741" text-anchor="middle" font-weight="700" textLength="202.0" lengthAdjust="spacing" >@timestamp per 5 seconds</text>
<text x="1020.10" y="290.95" font-size="13.1" fill="#69707D" text-anchor="end" >100</text>
<text x="1020.10" y="339.85" font-size="13.1" fill="#69707D" text-anchor="end" >80</text>
<text x="1020.10" y="388.65" font-size="13.1" fill="#69707D" text-anchor="end" >60</text>
<text x="1020.10" y="437.45" font-size="13.1" fill="#69707D" text-anchor="end" >40</text>
<text x="1020.10" y="486.15" font-size="13.1" fill="#69707D" text-anchor="end" >20</text>
<text x="1020.10" y="534.45" font-size="13.1" fill="#69707D" text-anchor="end" >0</text>
<polyline points="1043.9,407.5 1055.2,530.6 1066.5,522.5 1077.8,530.6 1089.0,467.3 1100.3,530.6 1111.6,530.6 1122.9,525.1 1134.2,530.6 1145.5,444.4 1156.8,530.6 1168.0,530.6 1179.3,530.6 1190.6,397.9 1201.9,530.5 1213.2,491.5 1224.5,527.1 1235.8,530.6 1247.0,340.7 1258.3,530.6 1269.6,530.6 1280.9,470.2 1292.2,499.8 1303.5,530.5 1314.7,321.7 1326.0,530.6 1337.3,530.6 1348.6,293.3 1359.9,530.6 1371.2,399.7 1382.5,530.6 1393.7,530.6 1405.0,319.9 1416.3,530.6 1427.6,530.6 1438.9,367.2 1450.2,530.6 1461.5,530.6 1472.7,512.3 1484.0,450.4 1495.3,483.7 1506.6,530.6 1517.9,530.6 1529.2,403.1 1540.4,530.6 1551.7,505.8 1563.0,530.5 1574.3,498.0 1585.6,530.5 1596.9,436.1 1608.2,530.6 1619.4,530.6 1630.7,402.0 1642.0,505.8 1653.3,530.6 1664.6,530.6 1675.9,530.6 1687.1,273.6 1698.4,530.6" fill="none" stroke="#68BC00" stroke-width="2.45" stroke-linejoin="round" />
<line x1="1043.90" y1="530.60" x2="1698.20" y2="530.60" stroke="#FE9200" stroke-width="2.3" />
<line x1="1005.00" y1="801.50" x2="1482.00" y2="801.50" stroke="rgba(255,255,255,.35)" stroke-width="1" />
<line x1="1005.00" y1="916.50" x2="1482.00" y2="916.50" stroke="#E6E8EE" stroke-width="1.25" />
<text x="1005.00" y="939.20" font-size="13.2" fill="#69707D" text-anchor="middle" >0</text>
<text x="1124.20" y="939.20" font-size="13.2" fill="#69707D" text-anchor="middle" >500</text>
<text x="1243.50" y="939.20" font-size="13.2" fill="#69707D" text-anchor="middle" >1,000</text>
<text x="1362.70" y="939.20" font-size="13.2" fill="#69707D" text-anchor="middle" >1,500</text>
<text x="1482.00" y="939.20" font-size="13.2" fill="#69707D" text-anchor="middle" >2,000</text>
<text x="1469.50" y="763.30" font-size="15" fill="#111" text-anchor="end" >2,000</text>
<text x="1469.50" y="849.30" font-size="15" fill="#111" text-anchor="end" >2,000</text>
<line x1="1048.20" y1="1042.80" x2="1698.00" y2="1042.80" stroke="#E9ECF3" stroke-width="1" stroke-dasharray="5 5"/>
<line x1="1048.20" y1="1073.40" x2="1698.00" y2="1073.40" stroke="#E9ECF3" stroke-width="1" stroke-dasharray="5 5"/>
<line x1="1048.20" y1="1104.00" x2="1698.00" y2="1104.00" stroke="#E9ECF3" stroke-width="1" stroke-dasharray="5 5"/>
<line x1="1048.20" y1="1134.70" x2="1698.00" y2="1134.70" stroke="#E9ECF3" stroke-width="1" stroke-dasharray="5 5"/>
<line x1="1048.20" y1="1165.30" x2="1698.00" y2="1165.30" stroke="#E9ECF3" stroke-width="1" stroke-dasharray="5 5"/>
<line x1="1048.20" y1="1042.80" x2="1048.20" y2="1197.10" stroke="#E1E4EC" stroke-width="1.5" />
<line x1="1048.20" y1="1196.60" x2="1698.60" y2="1196.60" stroke="#E3E6EE" stroke-width="1.25" />
<line x1="1069.80" y1="1042.80" x2="1069.80" y2="1224.10" stroke="#CBCBCB" stroke-width="1.5" />
<text x="1073.00" y="1222.90" font-size="13.1" fill="#69707D" >57'</text>
<text x="1073.00" y="1210.90" font-size="13.1" fill="#69707D" >0&quot;</text>
<line x1="1102.86" y1="1196.60" x2="1102.86" y2="1212.10" stroke="#E3E6EE" stroke-width="1.25" />
<text x="1106.06" y="1210.90" font-size="13.1" fill="#69707D" >15&quot;</text>
<line x1="1135.92" y1="1196.60" x2="1135.92" y2="1212.10" stroke="#E3E6EE" stroke-width="1.25" />
<text x="1139.12" y="1210.90" font-size="13.1" fill="#69707D" >30&quot;</text>
<line x1="1168.99" y1="1196.60" x2="1168.99" y2="1212.10" stroke="#E3E6EE" stroke-width="1.25" />
<text x="1172.19" y="1210.90" font-size="13.1" fill="#69707D" >45&quot;</text>
<line x1="1202.05" y1="1042.80" x2="1202.05" y2="1224.10" stroke="#CBCBCB" stroke-width="1.5" />
<text x="1205.25" y="1222.90" font-size="13.1" fill="#69707D" >58'</text>
<text x="1205.25" y="1210.90" font-size="13.1" fill="#69707D" >0&quot;</text>
<line x1="1235.11" y1="1196.60" x2="1235.11" y2="1212.10" stroke="#E3E6EE" stroke-width="1.25" />
<text x="1238.31" y="1210.90" font-size="13.1" fill="#69707D" >15&quot;</text>
<line x1="1268.17" y1="1196.60" x2="1268.17" y2="1212.10" stroke="#E3E6EE" stroke-width="1.25" />
<text x="1271.38" y="1210.90" font-size="13.1" fill="#69707D" >30&quot;</text>
<line x1="1301.24" y1="1196.60" x2="1301.24" y2="1212.10" stroke="#E3E6EE" stroke-width="1.25" />
<text x="1304.44" y="1210.90" font-size="13.1" fill="#69707D" >45&quot;</text>
<line x1="1334.30" y1="1042.80" x2="1334.30" y2="1224.10" stroke="#CBCBCB" stroke-width="1.5" />
<text x="1337.50" y="1222.90" font-size="13.1" fill="#69707D" >59'</text>
<text x="1337.50" y="1210.90" font-size="13.1" fill="#69707D" >0&quot;</text>
<line x1="1367.36" y1="1196.60" x2="1367.36" y2="1212.10" stroke="#E3E6EE" stroke-width="1.25" />
<text x="1370.56" y="1210.90" font-size="13.1" fill="#69707D" >15&quot;</text>
<line x1="1400.42" y1="1196.60" x2="1400.42" y2="1212.10" stroke="#E3E6EE" stroke-width="1.25" />
<text x="1403.62" y="1210.90" font-size="13.1" fill="#69707D" >30&quot;</text>
<line x1="1433.49" y1="1196.60" x2="1433.49" y2="1212.10" stroke="#E3E6EE" stroke-width="1.25" />
<text x="1436.69" y="1210.90" font-size="13.1" fill="#69707D" >45&quot;</text>
<line x1="1466.55" y1="1042.80" x2="1466.55" y2="1224.10" stroke="#676767" stroke-width="1.7" />
<text x="1469.75" y="1222.90" font-size="13.1" fill="#69707D" >0'</text>
<text x="1469.75" y="1210.90" font-size="13.1" fill="#69707D" >0&quot;</text>
<line x1="1499.61" y1="1196.60" x2="1499.61" y2="1212.10" stroke="#E3E6EE" stroke-width="1.25" />
<text x="1502.81" y="1210.90" font-size="13.1" fill="#69707D" >15&quot;</text>
<line x1="1532.67" y1="1196.60" x2="1532.67" y2="1212.10" stroke="#E3E6EE" stroke-width="1.25" />
<text x="1535.88" y="1210.90" font-size="13.1" fill="#69707D" >30&quot;</text>
<line x1="1565.74" y1="1196.60" x2="1565.74" y2="1212.10" stroke="#E3E6EE" stroke-width="1.25" />
<text x="1568.94" y="1210.90" font-size="13.1" fill="#69707D" >45&quot;</text>
<line x1="1598.80" y1="1042.80" x2="1598.80" y2="1224.10" stroke="#CBCBCB" stroke-width="1.5" />
<text x="1602.00" y="1222.90" font-size="13.1" fill="#69707D" >1'</text>
<text x="1602.00" y="1210.90" font-size="13.1" fill="#69707D" >0&quot;</text>
<line x1="1631.86" y1="1196.60" x2="1631.86" y2="1212.10" stroke="#E3E6EE" stroke-width="1.25" />
<text x="1635.06" y="1210.90" font-size="13.1" fill="#69707D" >15&quot;</text>
<line x1="1664.92" y1="1196.60" x2="1664.92" y2="1212.10" stroke="#E3E6EE" stroke-width="1.25" />
<text x="1668.12" y="1210.90" font-size="13.1" fill="#69707D" >30&quot;</text>
<line x1="1697.99" y1="1196.60" x2="1697.99" y2="1212.10" stroke="#E3E6EE" stroke-width="1.25" />
<text x="1050.80" y="1235.90" font-size="13.1" fill="#69707D" >Apr 5, 2023, 17h</text>
<text x="1373.40" y="1263.80" font-size="15.5" fill="#343741" text-anchor="middle" font-weight="700" textLength="202.0" lengthAdjust="spacing" >@timestamp per 5 seconds</text>
<text x="1035.20" y="1046.75" font-size="13.1" fill="#69707D" text-anchor="end" >5.00/s</text>
<text x="1035.20" y="1077.35" font-size="13.1" fill="#69707D" text-anchor="end" >4.00/s</text>
<text x="1035.20" y="1107.95" font-size="13.1" fill="#69707D" text-anchor="end" >3.00/s</text>
<text x="1035.20" y="1138.65" font-size="13.1" fill="#69707D" text-anchor="end" >2.00/s</text>
<text x="1035.20" y="1169.25" font-size="13.1" fill="#69707D" text-anchor="end" >1.00/s</text>
<text x="1035.20" y="1199.85" font-size="13.1" fill="#69707D" text-anchor="end" >0.00/s</text>
<polyline points="1058.8,1195.5 1069.8,1184.6 1080.8,1117.2 1091.9,1196.0 1102.9,1196.0 1113.9,1086.5 1124.9,1195.5 1135.9,1178.6 1147.0,1196.0 1158.0,1098.8 1169.0,1191.6 1180.0,1196.0 1191.0,1121.1 1202.1,1196.0 1213.1,1196.0 1224.1,1111.3 1235.1,1123.7 1246.1,1196.0 1257.2,1196.0 1268.2,1129.9 1279.2,1163.1 1290.2,1196.0 1301.2,1196.0 1312.3,1196.0 1323.3,1141.9 1334.3,1169.2 1345.3,1196.0 1356.3,1062.0 1367.4,1196.0 1378.4,1043.9 1389.4,1196.0 1400.4,1166.4 1411.4,1173.0 1422.5,1196.0 1433.5,1196.0 1444.5,1092.7 1455.5,1191.6 1466.5,1196.0 1477.6,1148.2 1488.6,1196.0 1499.6,1154.4 1510.6,1196.0 1521.6,1129.9 1532.7,1196.0 1543.7,1179.1 1554.7,1196.0 1565.7,1068.2 1576.7,1179.1 1587.8,1196.0 1598.8,1117.4 1609.8,1196.0 1620.8,1160.5 1631.8,1173.0 1642.9,1196.0 1653.9,1166.6 1664.9,1196.0 1675.9,1092.7 1686.9,1196.0 1698.0,1173.6" fill="none" stroke="#3185FC" stroke-width="2.5" stroke-linejoin="round" />
<line x1="1058.80" y1="1196.10" x2="1698.60" y2="1196.10" stroke="#DB1374" stroke-width="2.4" />
<polyline points="1058.8,1118.3 1069.8,1196.0 1080.8,1154.4 1091.9,1196.0 1102.9,1111.3 1113.9,1196.0 1124.9,1148.2 1135.9,1196.0 1147.0,1196.0 1158.0,1153.9 1169.0,1123.7 1180.0,1196.0 1191.0,1111.3 1202.1,1191.6 1213.1,1196.0 1224.1,1148.2 1235.1,1173.2 1246.1,1185.6 1257.2,1196.0 1268.2,1191.6 1279.2,1196.0 1290.2,1191.6 1301.2,1196.0 1312.3,1191.6 1323.3,1196.0 1334.3,1196.0 1345.3,1173.0 1356.3,1191.6 1367.4,1191.6 1378.4,1196.0 1389.4,1062.0 1400.4,1196.0 1411.4,1179.1 1422.5,1196.0 1433.5,1191.6 1444.5,1148.2 1455.5,1196.0 1466.5,1179.1 1477.6,1185.6 1488.6,1196.0 1499.6,1123.7 1510.6,1196.0 1521.6,1196.0 1532.7,1141.9 1543.7,1191.6 1554.7,1196.0 1565.7,1147.8 1576.7,1099.2 1587.8,1196.0 1598.8,1185.6 1609.8,1160.5 1620.8,1173.0 1631.8,1196.0 1642.9,1173.0 1653.9,1184.6 1664.9,1196.0 1675.9,1196.0 1686.9,1043.9 1698.0,1196.0" fill="none" stroke="#00B3A4" stroke-width="2.5" stroke-linejoin="round" />
<clipPath id="cl1"><rect x="1050" y="1357.3" width="175" height="156"/></clipPath>
<line x1="1053.50" y1="1393.00" x2="1221.00" y2="1393.00" stroke="#E9ECF3" stroke-width="1" stroke-dasharray="5 5"/>
<line x1="1053.50" y1="1432.30" x2="1221.00" y2="1432.30" stroke="#E9ECF3" stroke-width="1" stroke-dasharray="5 5"/>
<line x1="1053.50" y1="1471.80" x2="1221.00" y2="1471.80" stroke="#E9ECF3" stroke-width="1" stroke-dasharray="5 5"/>
<line x1="1053.50" y1="1357.50" x2="1053.50" y2="1511.75" stroke="#E1E4EC" stroke-width="1.5" />
<line x1="1053.50" y1="1511.25" x2="1221.30" y2="1511.25" stroke="#E3E6EE" stroke-width="1.25" />
<line x1="1059.30" y1="1357.50" x2="1059.30" y2="1526.25" stroke="#D6D6D6" stroke-width="1.3" />
<text x="1062.70" y="1525.35" font-size="13.1" fill="#69707D" >57'</text>
<line x1="1093.30" y1="1357.50" x2="1093.30" y2="1526.25" stroke="#D6D6D6" stroke-width="1.3" />
<text x="1096.70" y="1525.35" font-size="13.1" fill="#69707D" >58'</text>
<line x1="1127.30" y1="1357.50" x2="1127.30" y2="1526.25" stroke="#D6D6D6" stroke-width="1.3" />
<text x="1130.70" y="1525.35" font-size="13.1" fill="#69707D" >59'</text>
<line x1="1161.30" y1="1357.50" x2="1161.30" y2="1526.25" stroke="#707070" stroke-width="1.6" />
<text x="1164.70" y="1525.35" font-size="13.1" fill="#69707D" >0'</text>
<line x1="1195.30" y1="1357.50" x2="1195.30" y2="1526.25" stroke="#D6D6D6" stroke-width="1.3" />
<text x="1198.70" y="1525.35" font-size="13.1" fill="#69707D" >1'</text>
<text x="1055.90" y="1538.29" font-size="13.1" fill="#69707D" >17</text>
<text x="1055.90" y="1550.45" font-size="13.1" fill="#69707D" >Apr 5, 2023</text>
<text x="1137.40" y="1579.10" font-size="15.5" fill="#343741" text-anchor="middle" font-weight="700" textLength="201.0" lengthAdjust="spacing" >@timestamp per 5 seconds</text>
<text x="1040.50" y="1396.95" font-size="13.1" fill="#69707D" text-anchor="end" >30</text>
<text x="1040.50" y="1436.25" font-size="13.1" fill="#69707D" text-anchor="end" >20</text>
<text x="1040.50" y="1475.75" font-size="13.1" fill="#69707D" text-anchor="end" >10</text>
<text x="1040.50" y="1514.95" font-size="13.1" fill="#69707D" text-anchor="end" >0</text>
<polyline points="1053.9,1424.2 1056.7,1384.6 1059.6,1393.0 1062.4,1373.3 1065.2,1389.1 1068.1,1365.3 1070.9,1365.3 1073.7,1405.4 1076.5,1349.9 1079.4,1399.5 1082.2,1421.2 1085.0,1384.6 1087.9,1384.6 1090.7,1389.1 1093.5,1397.5 1096.4,1393.0 1099.2,1405.4 1102.0,1376.7 1104.8,1429.2 1107.7,1384.6 1110.5,1349.9 1113.3,1365.3 1116.2,1393.5 1119.0,1384.6 1121.8,1349.9 1124.7,1373.3 1127.5,1349.9 1130.3,1413.3 1133.2,1417.3 1136.0,1393.0 1138.8,1401.5 1141.7,1369.3 1144.5,1365.3 1147.3,1384.6 1150.1,1401.5 1153.0,1417.3 1155.8,1365.3 1158.6,1384.6 1161.5,1351.4 1164.3,1365.3 1167.1,1384.6 1170.0,1409.4 1172.8,1365.3 1175.6,1429.2 1178.4,1381.7 1181.3,1349.9 1184.1,1381.7 1186.9,1359.9 1189.8,1349.9 1192.6,1399.5 1195.4,1384.6 1198.2,1393.5 1201.1,1425.2 1203.9,1361.9 1206.7,1365.3 1209.6,1381.7 1212.4,1381.7 1215.2,1361.9 1218.1,1361.9 1220.9,1388.6" fill="none" stroke="#3185FC" stroke-width="2.5" stroke-linejoin="round" clip-path="url(#cl1)"/>
<polyline points="1053.9,1376.7 1056.7,1365.3 1059.6,1417.3 1062.4,1417.3 1065.2,1384.6 1068.1,1425.2 1070.9,1369.3 1073.7,1433.1 1076.5,1394.0 1079.4,1349.9 1082.2,1397.5 1085.0,1397.5 1087.9,1373.3 1090.7,1389.1 1093.5,1361.9 1096.4,1433.1 1099.2,1409.4 1102.0,1389.1 1104.8,1409.4 1107.7,1349.9 1110.5,1361.9 1113.3,1381.7 1116.2,1365.3 1119.0,1381.7 1121.8,1361.9 1124.7,1357.9 1127.5,1373.3 1130.3,1361.9 1133.2,1417.3 1136.0,1433.1 1138.8,1393.5 1141.7,1384.6 1144.5,1349.9 1147.3,1373.3 1150.1,1369.3 1153.0,1389.1 1155.8,1397.5 1158.6,1365.3 1161.5,1373.3 1164.3,1365.3 1167.1,1397.5 1170.0,1369.3 1172.8,1384.6 1175.6,1397.5 1178.4,1365.3 1181.3,1373.3 1184.1,1349.9 1186.9,1369.3 1189.8,1393.5 1192.6,1429.2 1195.4,1349.9 1198.2,1429.2 1201.1,1361.9 1203.9,1369.3 1206.7,1369.3 1209.6,1389.6 1212.4,1349.9 1215.2,1409.4 1218.1,1369.3 1220.9,1358.4" fill="none" stroke="#DB1374" stroke-width="2.5" stroke-linejoin="round" clip-path="url(#cl1)"/>
<text transform="translate(999.6,1434.5) rotate(-90)" text-anchor="middle" font-size="15.5" font-weight="700" fill="#343741" textLength="44" lengthAdjust="spacing">Count</text>
<clipPath id="cl2"><rect x="1520" y="1357.3" width="185" height="156"/></clipPath>
<line x1="1524.25" y1="1383.00" x2="1699.00" y2="1383.00" stroke="#E9ECF3" stroke-width="1" stroke-dasharray="5 5"/>
<line x1="1524.25" y1="1425.75" x2="1699.00" y2="1425.75" stroke="#E9ECF3" stroke-width="1" stroke-dasharray="5 5"/>
<line x1="1524.25" y1="1468.25" x2="1699.00" y2="1468.25" stroke="#E9ECF3" stroke-width="1" stroke-dasharray="5 5"/>
<line x1="1524.25" y1="1357.50" x2="1524.25" y2="1511.75" stroke="#E1E4EC" stroke-width="1.5" />
<line x1="1524.25" y1="1511.25" x2="1699.30" y2="1511.25" stroke="#E3E6EE" stroke-width="1.25" />
<line x1="1530.00" y1="1357.50" x2="1530.00" y2="1526.25" stroke="#D6D6D6" stroke-width="1.3" />
<text x="1533.40" y="1525.35" font-size="13.1" fill="#69707D" >57'</text>
<line x1="1565.50" y1="1357.50" x2="1565.50" y2="1526.25" stroke="#D6D6D6" stroke-width="1.3" />
<text x="1568.90" y="1525.35" font-size="13.1" fill="#69707D" >58'</text>
<line x1="1601.25" y1="1357.50" x2="1601.25" y2="1526.25" stroke="#D6D6D6" stroke-width="1.3" />
<text x="1604.65" y="1525.35" font-size="13.1" fill="#69707D" >59'</text>
<line x1="1636.75" y1="1357.50" x2="1636.75" y2="1526.25" stroke="#707070" stroke-width="1.6" />
<text x="1640.15" y="1525.35" font-size="13.1" fill="#69707D" >0'</text>
<line x1="1672.25" y1="1357.50" x2="1672.25" y2="1526.25" stroke="#D6D6D6" stroke-width="1.3" />
<text x="1675.65" y="1525.35" font-size="13.1" fill="#69707D" >1'</text>
<text x="1526.65" y="1538.29" font-size="13.1" fill="#69707D" >17</text>
<text x="1526.65" y="1550.45" font-size="13.1" fill="#69707D" >Apr 5, 2023</text>
<text x="1611.78" y="1579.10" font-size="15.5" fill="#343741" text-anchor="middle" font-weight="700" textLength="201.0" lengthAdjust="spacing" >@timestamp per 5 seconds</text>
<text x="1511.25" y="1386.95" font-size="13.1" fill="#69707D" text-anchor="end" >3</text>
<text x="1511.25" y="1429.70" font-size="13.1" fill="#69707D" text-anchor="end" >2</text>
<text x="1511.25" y="1472.20" font-size="13.1" fill="#69707D" text-anchor="end" >1</text>
<text x="1511.25" y="1514.70" font-size="13.1" fill="#69707D" text-anchor="end" >0</text>
<polyline points="1527.1,1510.8 1530.1,1510.8 1533.0,1425.3 1536.0,1510.8 1539.0,1425.3 1541.9,1494.2 1544.9,1510.8 1547.9,1510.8 1550.8,1434.2 1553.8,1510.8 1556.8,1485.8 1559.7,1485.8 1562.7,1442.6 1565.7,1510.8 1568.6,1510.8 1571.6,1442.6 1574.5,1510.8 1577.5,1425.3 1580.5,1494.2 1583.5,1510.8 1586.4,1485.8 1589.4,1459.5 1592.3,1454.2 1595.3,1510.8 1598.3,1485.8 1601.2,1485.8 1604.2,1510.8 1607.2,1349.4 1610.1,1481.6 1613.1,1434.2 1616.1,1510.8 1619.0,1485.8 1622.0,1400.0 1625.0,1510.8 1627.9,1468.4 1630.9,1485.8 1633.8,1510.8 1636.8,1510.8 1639.8,1442.6 1642.8,1510.8 1645.7,1451.0 1648.7,1510.8 1651.7,1510.8 1654.6,1459.5 1657.6,1510.8 1660.5,1510.8 1663.5,1434.2 1666.5,1502.6 1669.4,1510.8 1672.4,1510.8 1675.4,1510.8 1678.3,1510.8 1681.3,1468.4 1684.3,1510.8 1687.2,1494.2 1690.2,1468.4 1693.2,1510.8 1696.1,1510.8 1699.1,1452.1" fill="none" stroke="#3185FC" stroke-width="2.5" stroke-linejoin="round" clip-path="url(#cl2)"/>
<polyline points="1527.1,1392.1 1530.1,1510.8 1533.0,1510.8 1536.0,1484.7 1539.0,1476.8 1541.9,1510.8 1544.9,1510.8 1547.9,1442.6 1550.8,1476.8 1553.8,1510.8 1556.8,1510.8 1559.7,1451.0 1562.7,1510.8 1565.7,1459.5 1568.6,1510.8 1571.6,1468.4 1574.5,1425.3 1577.5,1510.8 1580.5,1510.8 1583.5,1476.8 1586.4,1510.8 1589.4,1510.8 1592.3,1408.4 1595.3,1510.8 1598.3,1510.8 1601.2,1502.6 1604.2,1510.8 1607.2,1459.5 1610.1,1510.8 1613.1,1510.8 1616.1,1442.6 1619.0,1510.8 1622.0,1510.8 1625.0,1391.6 1627.9,1510.8 1630.9,1476.8 1633.8,1510.8 1636.8,1510.8 1639.8,1374.4 1642.8,1510.8 1645.7,1468.4 1648.7,1510.8 1651.7,1510.8 1654.6,1510.8 1657.6,1425.3 1660.5,1510.8 1663.5,1510.8 1666.5,1502.6 1669.4,1510.8 1672.4,1382.6 1675.4,1510.8 1678.3,1510.8 1681.3,1494.2 1684.3,1510.8 1687.2,1442.6 1690.2,1510.8 1693.2,1425.3 1696.1,1510.8 1699.1,1502.6" fill="none" stroke="#DB1374" stroke-width="2.5" stroke-linejoin="round" clip-path="url(#cl2)"/>
<text transform="translate(1477.2,1434.5) rotate(-90)" text-anchor="middle" font-size="15.5" font-weight="700" fill="#343741" textLength="44" lengthAdjust="spacing">Count</text>
</svg>
</body></html>
